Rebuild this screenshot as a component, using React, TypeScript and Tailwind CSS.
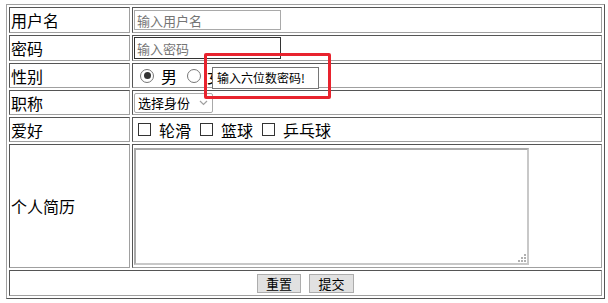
import React from "react";

const cell =
  "border border-solid border-t-[#555] border-l-[#555] border-r-[#a0a0a0] border-b-[#a0a0a0] p-[1px] align-middle";

export default function App() {
  return (
    <div
      className="relative w-[608px] h-[303px] bg-white text-black overflow-hidden"
      style={{ fontFamily: '"Noto Sans CJK SC", "Noto Sans", sans-serif' }}
    >
      <table className="absolute left-[6px] top-[4px] w-[599px] border-separate border-spacing-[2px] border border-solid border-t-[#a0a0a0] border-l-[#a0a0a0] border-r-[#555] border-b-[#555] text-[16px] leading-[20px]">
        <tbody>
          <tr>
            <td className={cell + " w-[121px] h-[26px]"}>用户名</td>
            <td className={cell + " h-[26px]"}>
              <input
                type="text"
                placeholder="输入用户名"
                className="block w-[147px] h-[20px] border border-[#a9a9a9] px-[2px] text-[13px] leading-[16px] placeholder:text-[#757575] outline-none"
              />
            </td>
          </tr>
          <tr>
            <td className={cell + " h-[26px]"}>密码</td>
            <td className={cell + " h-[26px]"}>
              <input
                type="password"
                placeholder="输入密码"
                className="block w-[147px] h-[22px] border border-[#333] px-[2px] text-[13px] leading-[16px] placeholder:text-[#757575] outline-none"
              />
            </td>
          </tr>
          <tr>
            <td className={cell + " h-[25px]"}>性别</td>
            <td className={cell + " h-[25px]"}>
              <div className="flex items-center pl-[6px]">
                <span className="flex items-center justify-center w-[14px] h-[14px] rounded-full border border-[#767676]">
                  <span className="w-[7px] h-[7px] rounded-full bg-[#333]" />
                </span>
                <span className="ml-[7px]">男</span>
                <span className="ml-[10px] w-[14px] h-[14px] rounded-full border border-[#767676]" />
                <span className="ml-[6px]">女</span>
              </div>
            </td>
          </tr>
          <tr>
            <td className={cell + " h-[25px]"}>职称</td>
            <td className={cell + " h-[25px]"}>
              <div className="flex items-center w-[79px] h-[20px] border border-[#a9a9a9] rounded-[2px] text-[13px] pl-[3px]">
                <span>选择身份</span>
                <svg className="ml-auto mr-[4px]" width="9" height="6" viewBox="0 0 9 6">
                  <path d="M1 1l3.5 3.5L8 1" fill="none" stroke="#a0a0a0" strokeWidth="1.2" />
                </svg>
              </div>
            </td>
          </tr>
          <tr>
            <td className={cell + " h-[25px]"}>爱好</td>
            <td className={cell + " h-[25px]"}>
              <div className="flex items-center pl-[4px]">
                <span className="w-[13px] h-[13px] border border-[#333]" />
                <span className="ml-[8px]">轮滑</span>
                <span className="ml-[9px] w-[13px] h-[13px] border border-[#333]" />
                <span className="ml-[8px]">篮球</span>
                <span className="ml-[9px] w-[13px] h-[13px] border border-[#333]" />
                <span className="ml-[8px]">乒乓球</span>
              </div>
            </td>
          </tr>
          <tr>
            <td className={cell + " h-[124px]"}>个人简历</td>
            <td className={cell + " h-[124px]"}>
              <div className="relative w-[395px] h-[117px]">
                <textarea className="block w-full h-full resize-none border-2 border-t-[#a9a9a9] border-l-[#a9a9a9] border-r-[#c8c8c8] border-b-[#c8c8c8] outline-none" />
                <svg className="absolute right-[3px] bottom-[3px]" width="8" height="8" viewBox="0 0 8 8">
                  <rect x="6" y="0" width="2" height="2" fill="#b0b0b0" />
                  <rect x="3" y="3" width="2" height="2" fill="#b0b0b0" />
                  <rect x="6" y="3" width="2" height="2" fill="#b0b0b0" />
                  <rect x="0" y="6" width="2" height="2" fill="#b0b0b0" />
                  <rect x="3" y="6" width="2" height="2" fill="#b0b0b0" />
                  <rect x="6" y="6" width="2" height="2" fill="#b0b0b0" />
                </svg>
              </div>
            </td>
          </tr>
          <tr>
            <td colSpan={2} className={cell + " h-[26px]"}>
              <div className="flex justify-center gap-[8px] text-[13px]">
                <button className="w-[44px] h-[19px] bg-[#e1e1e1] border border-[#adadad] leading-[17px]">
                  重置
                </button>
                <button className="w-[45px] h-[19px] bg-[#e1e1e1] border border-[#adadad] leading-[17px]">
                  提交
                </button>
              </div>
            </td>
          </tr>
        </tbody>
      </table>

      {/* tooltip annotation */}
      <div className="absolute left-[204px] top-[53px] w-[127px] h-[46px] border-[3px] border-[#e8232e] rounded-[2px]" />
      <div className="absolute left-[212px] top-[67px] w-[107px] h-[22px] border border-[#767676] bg-white text-[12px] leading-[20px] pl-[4px] whitespace-nowrap">
        输入六位数密码!
      </div>
    </div>
  );
}
